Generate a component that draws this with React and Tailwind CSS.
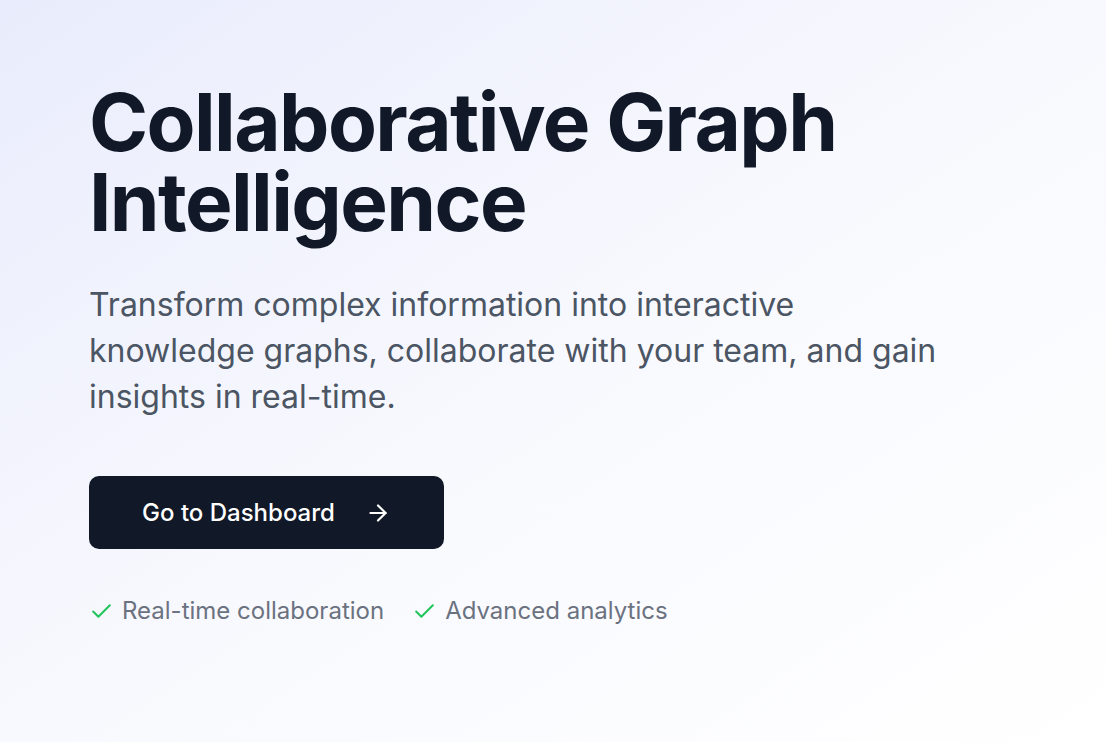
import { ArrowRight, Check } from "lucide-react";

const features = ["Real-time collaboration", "Advanced analytics"];

export default function App() {
  return (
    <div
      className="min-h-screen w-full bg-gradient-to-br from-[#e9ecfc] via-[#f8f9fe] to-white"
      style={{ fontFamily: "Inter, 'Noto Sans', sans-serif" }}
    >
      <section className="px-[89px] pt-[82px] pb-20">
        {/* Hero heading */}
        <h1 className="text-[80px] leading-[80px] font-bold tracking-[-0.02em] text-[#111827]">
          Collaborative Graph
          <br />
          Intelligence
        </h1>

        <p className="mt-[40px] max-w-[860px] text-[32px] leading-[46px] text-[#4b5563]">
          Transform complex information into interactive knowledge graphs,
          collaborate with your team, and gain insights in real-time.
        </p>

        <button className="mt-[56px] flex h-[73px] w-[355px] items-center justify-center gap-[30px] rounded-[10px] bg-[#111827] text-[24px] font-medium text-white">
          Go to Dashboard
          <ArrowRight className="h-[26px] w-[26px]" strokeWidth={2} />
        </button>

        {/* Feature list */}
        <div className="mt-[44px] flex items-center gap-[28px]">
          {features.map((f) => (
            <div key={f} className="flex items-center gap-[8px] text-[24px] text-[#6b7280]">
              <Check className="h-[25px] w-[25px] text-[#22c55e]" strokeWidth={2} />
              {f}
            </div>
          ))}
        </div>
      </section>
    </div>
  );
}
